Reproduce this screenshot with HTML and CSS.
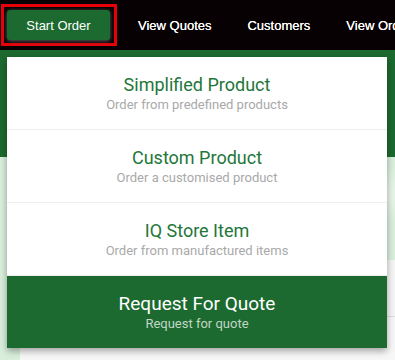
FILE: index.html
```html
<!DOCTYPE html>
<html>
<head>
	<title>Start Order</title>
	<link rel="stylesheet" href="styles.css">
</head>
<body>
	<nav class="topnav">
		<div class="highlight">
			<a class="start-btn" href="#">Start Order</a>
		</div>
		<a class="nav-link" href="#">View Quotes</a>
		<a class="nav-link" href="#">Customers</a>
		<a class="nav-link" href="#">View Orders</a>
	</nav>

	<div class="page">
		<div class="hero"></div>
		<div class="content">
			<div class="panel"></div>
		</div>

		<div class="dropdown">
			<a class="option" href="#">
				<span class="option-title">Simplified Product</span>
				<span class="option-sub">Order from predefined products</span>
			</a>
			<a class="option" href="#">
				<span class="option-title">Custom Product</span>
				<span class="option-sub">Order a customised product</span>
			</a>
			<a class="option" href="#">
				<span class="option-title">IQ Store Item</span>
				<span class="option-sub">Order from manufactured items</span>
			</a>
			<a class="option option-quote" href="#">
				<span class="option-title">Request For Quote</span>
				<span class="option-sub">Request for quote</span>
			</a>
		</div>
	</div>
</body>
</html>
```

FILE: styles.css
```css
body {
	font-family: "Liberation Sans", Arial, sans-serif;
	margin: 0;
	padding: 0;
	width: 395px;
	height: 360px;
	overflow: hidden;
	background-color: #f5f5f5;
}
a {
	text-decoration: none;
}
.topnav {
	display: flex;
	align-items: center;
	height: 50px;
	background-color: #080103;
	white-space: nowrap;
	overflow: hidden;
}
.highlight {
	margin-left: 1px;
	margin-right: 3px;
	padding: 3px 4px 3px 3px;
	border: 3px solid #e5000a;
}
.start-btn {
	display: flex;
	align-items: center;
	justify-content: center;
	width: 103px;
	height: 30px;
	border-radius: 3px;
	background-color: #1c6a2f;
	box-shadow: 0 1px 4px rgba(120, 120, 120, 0.8);
	color: #fff;
	font-size: 13px;
}
.nav-link {
	padding: 0 18px;
	color: #fff;
	font-size: 13px;
	text-shadow: 0 0 0.4px #fff;
}
.page {
	position: relative;
	height: 310px;
}
.hero {
	height: 107px;
	background-color: #1c6a2f;
}
.content {
	height: 203px;
	box-sizing: border-box;
	padding-top: 103px;
	background-color: #d9efdc;
	background-image: radial-gradient(circle at 97% 18%, rgba(255, 255, 255, 0.55) 0, rgba(255, 255, 255, 0) 28px);
}
.panel {
	margin-left: 20px;
	height: 100px;
	background-color: #f5f5f5;
	background-image: linear-gradient(#f5f5f5 56px, #dedede 56px, #dedede 57px, #f7f7f7 57px);
}
.dropdown {
	position: absolute;
	top: 7px;
	left: 7px;
	width: 380px;
	background-color: #fff;
	box-shadow: 0 3px 7px rgba(0, 0, 0, 0.35);
	font-family: Roboto, "Liberation Sans", sans-serif;
}
.option {
	display: flex;
	flex-direction: column;
	align-items: center;
	height: 73px;
	box-sizing: border-box;
	padding-top: 17px;
	border-bottom: 1px solid #eeeeee;
}
.option-title {
	font-size: 18px;
	line-height: 22px;
	color: #23763a;
}
.option-sub {
	margin-top: 1px;
	font-size: 13px;
	line-height: 16px;
	color: #a9a9a9;
}
.option-quote {
	height: 72px;
	border-bottom: none;
	background-color: #1c6a2f;
}
.option-quote .option-title {
	font-size: 19px;
	color: #fff;
}
.option-quote .option-sub {
	color: #c2d6c6;
}
```
